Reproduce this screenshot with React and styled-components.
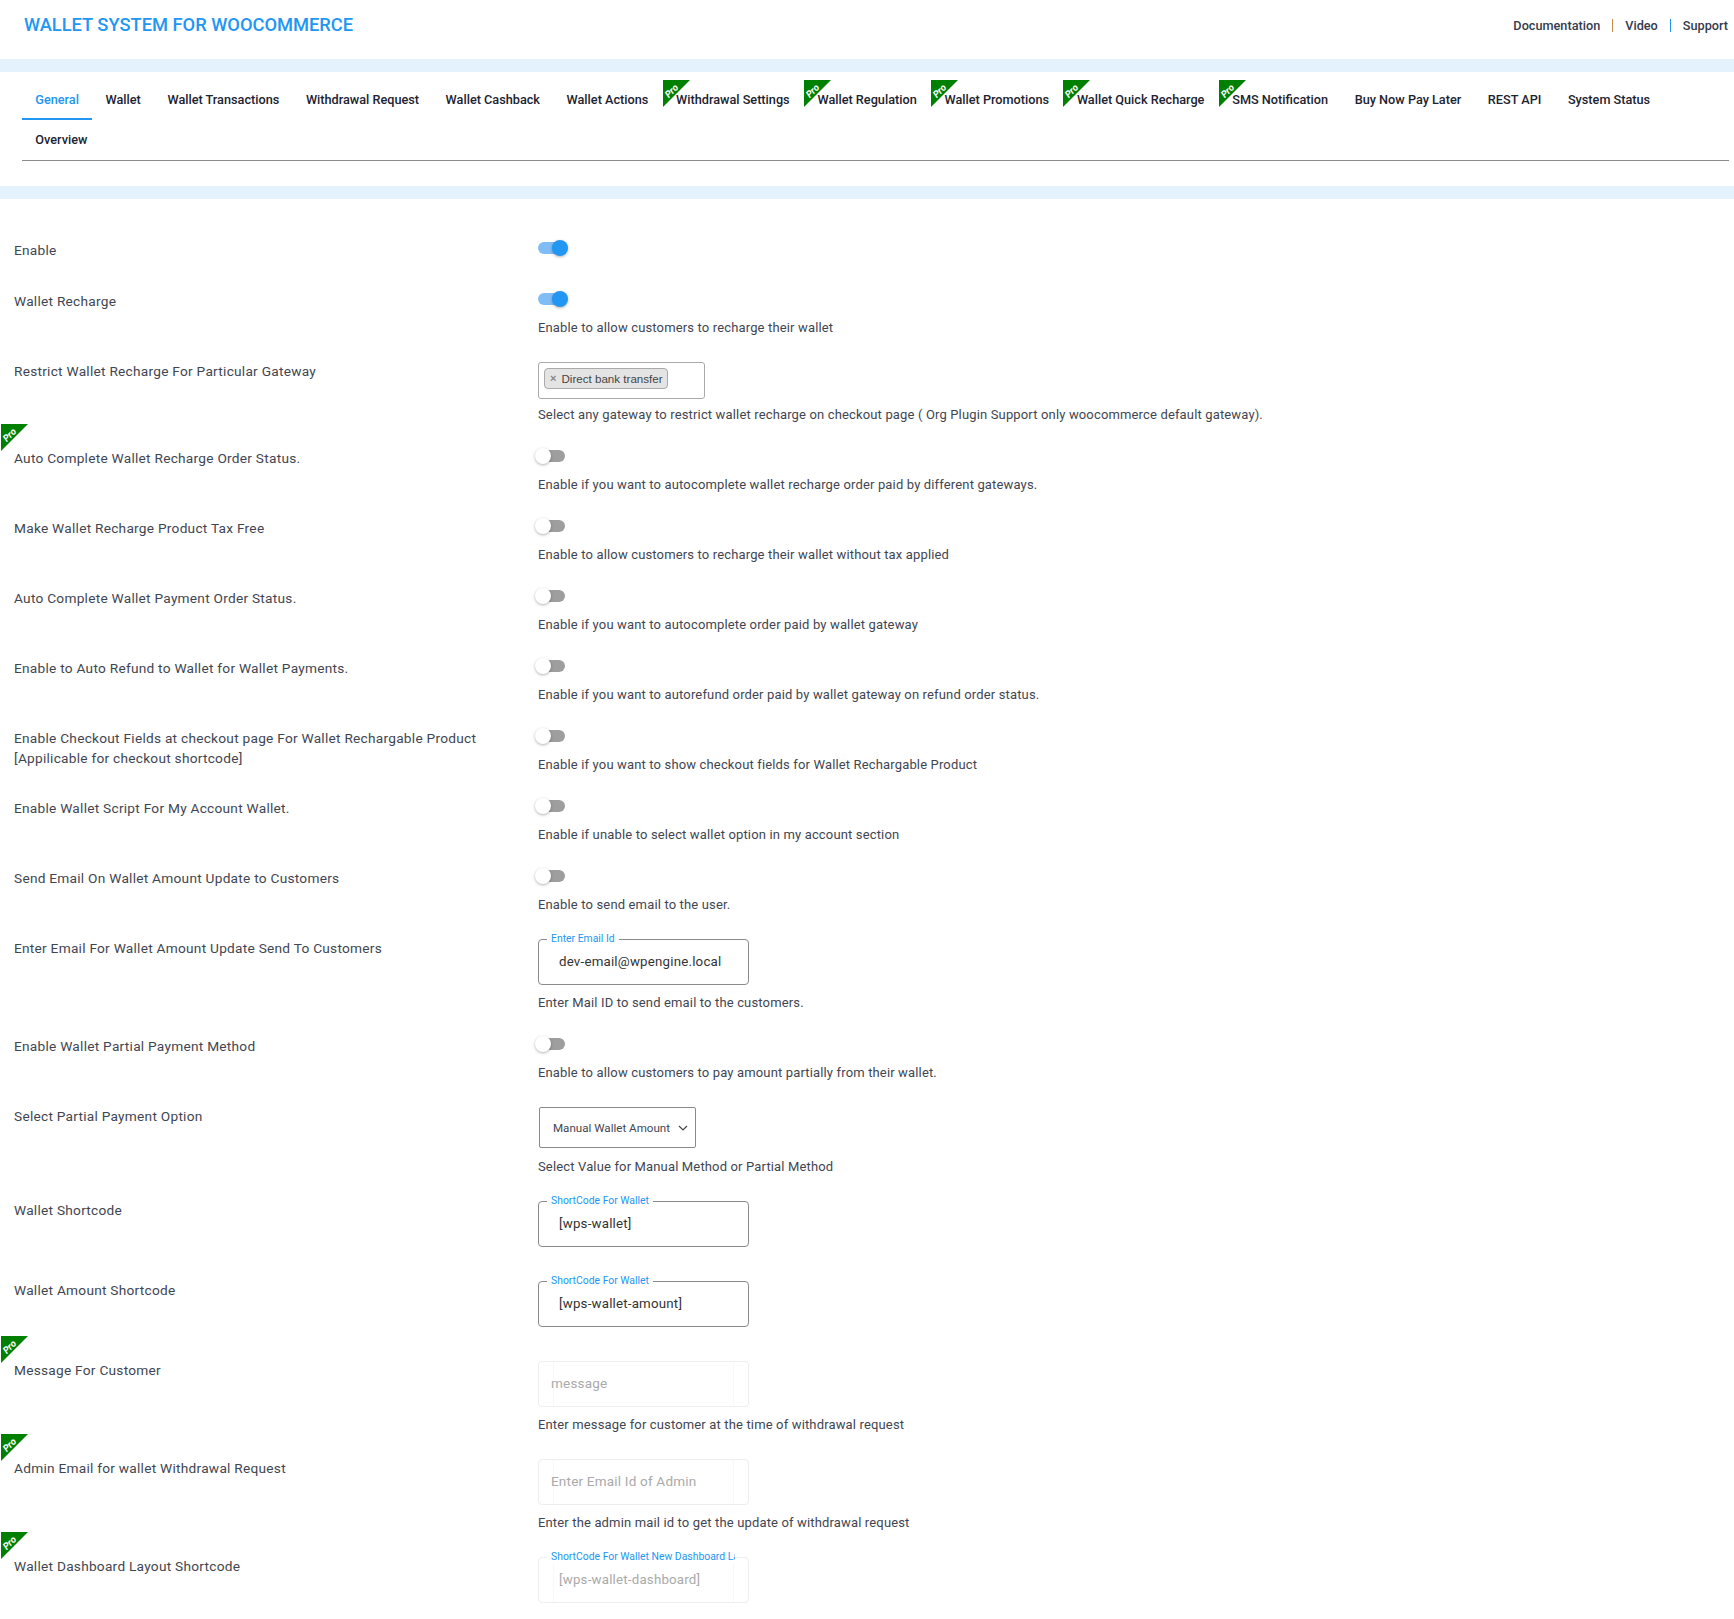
import React from "react";
import styled, { createGlobalStyle } from "styled-components";

const GlobalStyle = createGlobalStyle`
  html, body {
    margin: 0;
    background: #fff;
    font-family: Roboto, "Liberation Sans", sans-serif;
    color: #333c4e;
  }
`;

const Page = styled.div`
  width: 1734px;
  height: 1619px;
  overflow: hidden;
`;

const Header = styled.header`
  height: 59px;
  display: flex;
  justify-content: space-between;
  padding: 0 6px 0 24px;
  box-sizing: border-box;
`;

const Title = styled.h1`
  margin: 15px 0 0;
  font-size: 18.3px;
  line-height: 20px;
  font-weight: 500;
  color: #2196f3;
`;

const HeaderLinks = styled.nav`
  display: flex;
  align-items: center;
  height: 51px;
  font-size: 12.7px;
  font-weight: 500;
  color: #333c4e;
`;

const Pipe = styled.span`
  width: 1px;
  height: 13px;
  margin: 0 12px;
  background: ${(p) => p.$color};
`;

const Band = styled.div`
  height: 13px;
  background: #e4f2fd;
`;

const TabCard = styled.div`
  height: 114px;
  padding: 8px 5px 0 22px;
  box-sizing: border-box;
  border-radius: 5px 0 0 5px;
`;

const TabList = styled.div`
  display: flex;
  flex-wrap: wrap;
  height: 80px;
  align-content: flex-start;
  border-bottom: 1px solid #8c8c8c;
`;

const Tab = styled.div`
  position: relative;
  height: 40px;
  line-height: 40px;
  padding: 0 13.3px 0 ${(p) => (p.$pro ? 14.5 : 13.3)}px;
  font-size: 12.7px;
  font-weight: 500;
  white-space: nowrap;
  box-sizing: border-box;
  color: ${(p) => (p.$active ? "#2196f3" : "#1c2330")};
  border-bottom: 2px solid ${(p) => (p.$active ? "#2196f3" : "transparent")};
`;

const Ribbon = styled.svg`
  position: absolute;
  left: ${(p) => p.$left}px;
  top: ${(p) => p.$top}px;
  width: 27px;
  height: 27px;
  overflow: visible;
`;

const Form = styled.div`
  padding: 39px 0 0 14px;
`;

const Row = styled.div`
  position: relative;
  display: grid;
  grid-template-columns: 524px 1fr;
  padding-bottom: ${(p) => (p.$help ? 21 : 31)}px;
`;

const Label = styled.div`
  width: 480px;
  padding-top: 2px;
  margin-bottom: -2px;
  font-size: 13.7px;
  line-height: 20px;
  letter-spacing: 0.25px;
  color: #3f4652;
`;

const Control = styled.div`
  display: flex;
  flex-direction: column;
  align-items: flex-start;
`;

const SwitchBox = styled.div`
  position: relative;
  width: 30px;
  height: 20px;
`;

const Track = styled.span`
  position: absolute;
  left: ${(p) => (p.$on ? 0 : 3)}px;
  top: 4px;
  width: ${(p) => (p.$on ? 25 : 24)}px;
  height: 12px;
  border-radius: 6px;
  background: ${(p) => (p.$on ? "#80bdf7" : "#9e9e9e")};
`;

const Knob = styled.span`
  position: absolute;
  left: ${(p) => (p.$on ? 14 : -3)}px;
  top: 2px;
  width: 16px;
  height: 16px;
  border-radius: 50%;
  background: ${(p) => (p.$on ? "#2196f3" : "#fff")};
  box-shadow: 0 1px 3px rgba(0, 0, 0, 0.3);
`;

const Field = styled.div`
  position: relative;
  isolation: isolate;
  margin-top: 3px;
  width: 211px;
  height: 46px;
  box-sizing: border-box;
  padding: 0 0 ${(p) => (p.$placeholder ? 2 : 2)}px ${(p) => (p.$placeholder ? 12 : 20)}px;
  display: flex;
  align-items: center;
  border: 1px solid ${(p) => (p.$disabled ? "#eeeeee" : "#8a8a8a")};
  border-radius: 4px;
  font-size: ${(p) => (p.$placeholder ? 13.5 : 13.3)}px;
  letter-spacing: 0.2px;
  color: ${(p) => (p.$disabled ? "#aaaaaa" : "#333")};

  ${(p) =>
    p.$disabled &&
    `&::before {
      content: "";
      position: absolute;
      z-index: -1;
      top: 0;
      bottom: 0;
      left: 14px;
      right: 14px;
      border-left: 1px solid #f8f8f8;
      border-right: 1px solid #f8f8f8;
    }`}
`;

const Help = styled.div`
  margin-top: 9px;
  font-size: 13px;
  line-height: 20px;
  letter-spacing: 0.15px;
  color: #3f4652;

  ${Field} + & {
    margin-top: 8px;
  }
`;

const FloatLabel = styled.span`
  position: absolute;
  left: 8px;
  top: -7px;
  max-width: 188px;
  padding: 0 4px;
  box-sizing: border-box;
  overflow: hidden;
  white-space: nowrap;
  background: #fff;
  font-size: 10.4px;
  line-height: 12px;
  letter-spacing: 0;
  color: #2196f3;
`;

const SelectBox = styled.div`
  margin-top: 3px;
  margin-left: 1px;
  width: 157px;
  height: 41px;
  box-sizing: border-box;
  padding: 0 7px 0 13px;
  display: flex;
  align-items: center;
  justify-content: space-between;
  border: 1px solid #8a8a8a;
  border-radius: 2px;
  font-size: 11.6px;
  color: #3f4652;
`;

const MultiBox = styled.div`
  margin-top: 3px;
  margin-bottom: -3px;
  width: 167px;
  height: 37px;
  box-sizing: border-box;
  padding: 4px 5px;
  border: 1px solid #aaa;
  border-radius: 3px;
`;

const Chip = styled.span`
  display: inline-flex;
  align-items: center;
  gap: 5px;
  height: 21px;
  padding: 0 4px 0 5px;
  box-sizing: border-box;
  border: 1px solid #aaa;
  border-radius: 4px;
  background: #e4e4e4;
  font-family: "Liberation Sans", Arial, sans-serif;
  font-size: 11.6px;
  color: #444;
`;

const ChipClose = styled.span`
  color: #888;
  font-size: 11px;
  font-weight: 700;
`;

const tabs = [
  { name: "General", active: true },
  { name: "Wallet" },
  { name: "Wallet Transactions" },
  { name: "Withdrawal Request" },
  { name: "Wallet Cashback" },
  { name: "Wallet Actions" },
  { name: "Withdrawal Settings", pro: true },
  { name: "Wallet Regulation", pro: true },
  { name: "Wallet Promotions", pro: true },
  { name: "Wallet Quick Recharge", pro: true },
  { name: "SMS Notification", pro: true },
  { name: "Buy Now Pay Later" },
  { name: "REST API" },
  { name: "System Status" },
  { name: "Overview" },
];

const ProRibbon = ({ left, top }) => (
  <Ribbon $left={left} $top={top} viewBox="0 0 27 27">
    <polygon points="0,0 27,0 0,27" fill="#008000" />
    <text
      x="8.5"
      y="14.2"
      textAnchor="middle"
      transform="rotate(-45 8.5 11)"
      fill="#fff"
      fontSize="9.5"
      fontWeight="700"
      fontStyle="italic"
      fontFamily="Roboto, sans-serif"
    >
      Pro
    </text>
  </Ribbon>
);

const Switch = ({ on }) => (
  <SwitchBox>
    <Track $on={on} />
    <Knob $on={on} />
  </SwitchBox>
);

const Shortcode = ({ label, value, disabled }) => (
  <Field $disabled={disabled}>
    <FloatLabel>{label}</FloatLabel>
    {value}
  </Field>
);

const Chevron = () => (
  <svg width="10" height="10" viewBox="0 0 10 10" fill="none" stroke="#444" strokeWidth="1.2">
    <path d="M1 3l4 4 4-4" />
  </svg>
);

const rows = [
  { label: "Enable", control: <Switch on /> },
  { label: "Wallet Recharge", control: <Switch on />, help: "Enable to allow customers to recharge their wallet" },
  {
    label: "Restrict Wallet Recharge For Particular Gateway",
    control: (
      <MultiBox>
        <Chip>
          <ChipClose>×</ChipClose>Direct bank transfer
        </Chip>
      </MultiBox>
    ),
    help: "Select any gateway to restrict wallet recharge on checkout page ( Org Plugin Support only woocommerce default gateway).",
  },
  { label: "Auto Complete Wallet Recharge Order Status.", pro: true, control: <Switch />, help: "Enable if you want to autocomplete wallet recharge order paid by different gateways." },
  { label: "Make Wallet Recharge Product Tax Free", control: <Switch />, help: "Enable to allow customers to recharge their wallet without tax applied" },
  { label: "Auto Complete Wallet Payment Order Status.", control: <Switch />, help: "Enable if you want to autocomplete order paid by wallet gateway" },
  { label: "Enable to Auto Refund to Wallet for Wallet Payments.", control: <Switch />, help: "Enable if you want to autorefund order paid by wallet gateway on refund order status." },
  {
    label: "Enable Checkout Fields at checkout page For Wallet Rechargable Product [Appilicable for checkout shortcode]",
    control: <Switch />,
    help: "Enable if you want to show checkout fields for Wallet Rechargable Product",
  },
  { label: "Enable Wallet Script For My Account Wallet.", control: <Switch />, help: "Enable if unable to select wallet option in my account section" },
  { label: "Send Email On Wallet Amount Update to Customers", control: <Switch />, help: "Enable to send email to the user." },
  {
    label: "Enter Email For Wallet Amount Update Send To Customers",
    control: <Shortcode label="Enter Email Id" value="dev-email@wpengine.local" />,
    help: "Enter Mail ID to send email to the customers.",
  },
  { label: "Enable Wallet Partial Payment Method", control: <Switch />, help: "Enable to allow customers to pay amount partially from their wallet." },
  {
    label: "Select Partial Payment Option",
    control: (
      <SelectBox>
        Manual Wallet Amount
        <Chevron />
      </SelectBox>
    ),
    help: "Select Value for Manual Method or Partial Method",
  },
  { label: "Wallet Shortcode", control: <Shortcode label="ShortCode For Wallet" value="[wps-wallet]" /> },
  { label: "Wallet Amount Shortcode", control: <Shortcode label="ShortCode For Wallet" value="[wps-wallet-amount]" /> },
  {
    label: "Message For Customer",
    pro: true,
    control: <Field $disabled $placeholder>message</Field>,
    help: "Enter message for customer at the time of withdrawal request",
  },
  {
    label: "Admin Email for wallet Withdrawal Request",
    pro: true,
    control: <Field $disabled $placeholder>Enter Email Id of Admin</Field>,
    help: "Enter the admin mail id to get the update of withdrawal request",
  },
  {
    label: "Wallet Dashboard Layout Shortcode",
    pro: true,
    control: <Shortcode disabled label="ShortCode For Wallet New Dashboard Layout" value="[wps-wallet-dashboard]" />,
  },
];

export default function App() {
  return (
    <Page>
      <GlobalStyle />
      <Header>
        <Title>WALLET SYSTEM FOR WOOCOMMERCE</Title>
        <HeaderLinks>
          Documentation
          <Pipe $color="#c98a4f" />
          Video
          <Pipe $color="#2196f3" />
          Support
        </HeaderLinks>
      </Header>
      <Band />
      <TabCard>
        <TabList>
          {tabs.map((tab) => (
            <Tab key={tab.name} $active={tab.active} $pro={tab.pro}>
              {tab.pro && <ProRibbon left={1} top={0} />}
              {tab.name}
            </Tab>
          ))}
        </TabList>
      </TabCard>
      <Band />
      <Form>
        {rows.map((row) => (
          <Row key={row.label} $help={row.help}>
            {row.pro && <ProRibbon left={-13} top={-22} />}
            <Label>{row.label}</Label>
            <Control>
              {row.control}
              {row.help && <Help>{row.help}</Help>}
            </Control>
          </Row>
        ))}
      </Form>
    </Page>
  );
}
